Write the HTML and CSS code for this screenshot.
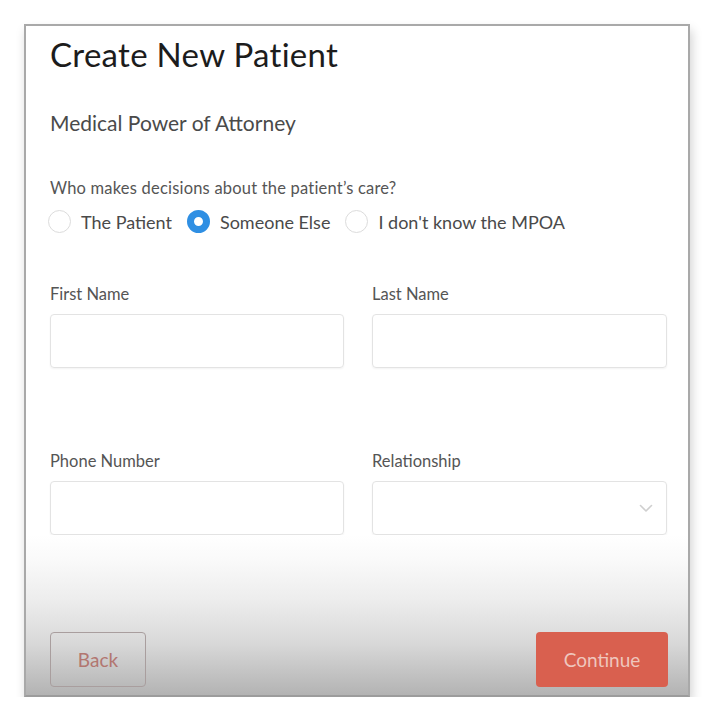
FILE: index.html
```html
<!DOCTYPE html>
<html lang="en">
<head>
    <meta charset="UTF-8">
    <meta name="viewport" content="width=device-width, initial-scale=1.0">
    <title>Create New Patient</title>
    <link rel="stylesheet" href="styles.css">
</head>
<body>

    <div class="modal">
        <div class="modal-body">
            <h1 class="title">Create New Patient</h1>
            <h2 class="section-title">Medical Power of Attorney</h2>

            <p class="question">Who makes decisions about the patient’s care?</p>
            <div class="radio-group">
                <label class="radio"><span class="radio-dot"></span>The Patient</label>
                <label class="radio checked"><span class="radio-dot"></span>Someone Else</label>
                <label class="radio"><span class="radio-dot"></span>I don't know the MPOA</label>
            </div>

            <div class="form-grid">
                <div class="field">
                    <span class="field-label">First Name</span>
                    <div class="input"></div>
                </div>
                <div class="field">
                    <span class="field-label">Last Name</span>
                    <div class="input"></div>
                </div>
                <div class="field">
                    <span class="field-label">Phone Number</span>
                    <div class="input"></div>
                </div>
                <div class="field">
                    <span class="field-label">Relationship</span>
                    <div class="input select">
                        <svg width="14" height="9" viewBox="0 0 14 9"><path d="M1.5 1.5 L7 7 L12.5 1.5" fill="none" stroke="#cfcfcf" stroke-width="1.6" stroke-linecap="round" stroke-linejoin="round"/></svg>
                    </div>
                </div>
            </div>
        </div>

        <!-- Barre des boutons -->
        <div class="modal-footer">
            <button class="btn btn-back">Back</button>
            <button class="btn btn-continue">Continue</button>
        </div>
    </div>

</body>
</html>
```

FILE: styles.css
```css
body {
    margin: 0;
    background-color: #ffffff;
    font-family: Lato, "Open Sans", sans-serif;
    color: #222;
}

.modal {
    margin: 24px 0 0 24px;
    width: 666px;
    height: 673px;
    box-sizing: border-box;
    border: 2px solid #a9a9a9;
    border-bottom-color: #9c9c9c;
    box-shadow: 2px 6px 10px rgba(0, 0, 0, 0.18);
    display: flex;
    flex-direction: column;
    background: #fff;
}

.modal-body {
    padding: 0 20px 0 24px;
}

.title {
    margin: 8px 0 0;
    font-size: 33px;
    font-weight: 400;
    color: #1c1c1c;
    letter-spacing: 0.3px;
}

.section-title {
    margin: 36px 0 0;
    font-size: 21px;
    font-weight: 400;
    color: #4a4a4a;
}

.question {
    margin: 43px 0 0;
    font-size: 16.5px;
    letter-spacing: 0.2px;
    color: #555;
}

.radio-group {
    display: flex;
    align-items: center;
    gap: 15px;
    margin: 12px 0 0 -2px;
}

.radio {
    display: flex;
    align-items: center;
    gap: 10px;
    font-size: 18px;
    color: #4a4a4a;
}

.radio-dot {
    width: 23px;
    height: 23px;
    box-sizing: border-box;
    border-radius: 50%;
    border: 1px solid #dcdcdc;
    background: #fff;
}

.radio.checked .radio-dot {
    border: 7px solid #2f8fe3;
    background: #fff;
}

.form-grid {
    display: grid;
    grid-template-columns: 294px 295px;
    column-gap: 28px;
    row-gap: 83px;
    margin-top: 51px;
}

.field {
    display: flex;
    flex-direction: column;
    gap: 10px;
}

.field-label {
    font-size: 16.5px;
    color: #555;
}

.input {
    height: 54px;
    box-sizing: border-box;
    border: 1px solid #e3e3e3;
    border-radius: 4px;
    box-shadow: 0 1px 2px rgba(0, 0, 0, 0.05);
}

.select {
    display: flex;
    align-items: center;
    justify-content: flex-end;
    padding-right: 13px;
}

.modal-footer {
    flex: 1;
    display: flex;
    justify-content: space-between;
    align-items: flex-end;
    padding: 0 20px 8px 24px;
    background: linear-gradient(to bottom, #ffffff 0%, #fafafa 15%, #ececec 42%, #d8d8d8 68%, #b3b3b3 100%);
}

.btn {
    height: 55px;
    font-family: Lato, "Open Sans", sans-serif;
    font-size: 19px;
    border-radius: 4px;
    cursor: pointer;
}

.btn-back {
    width: 96px;
    background: transparent;
    border: 1px solid #a99e9e;
    color: #b27670;
}

.btn-continue {
    width: 132px;
    background: #d9604f;
    border: none;
    color: #efc6bd;
}
```
